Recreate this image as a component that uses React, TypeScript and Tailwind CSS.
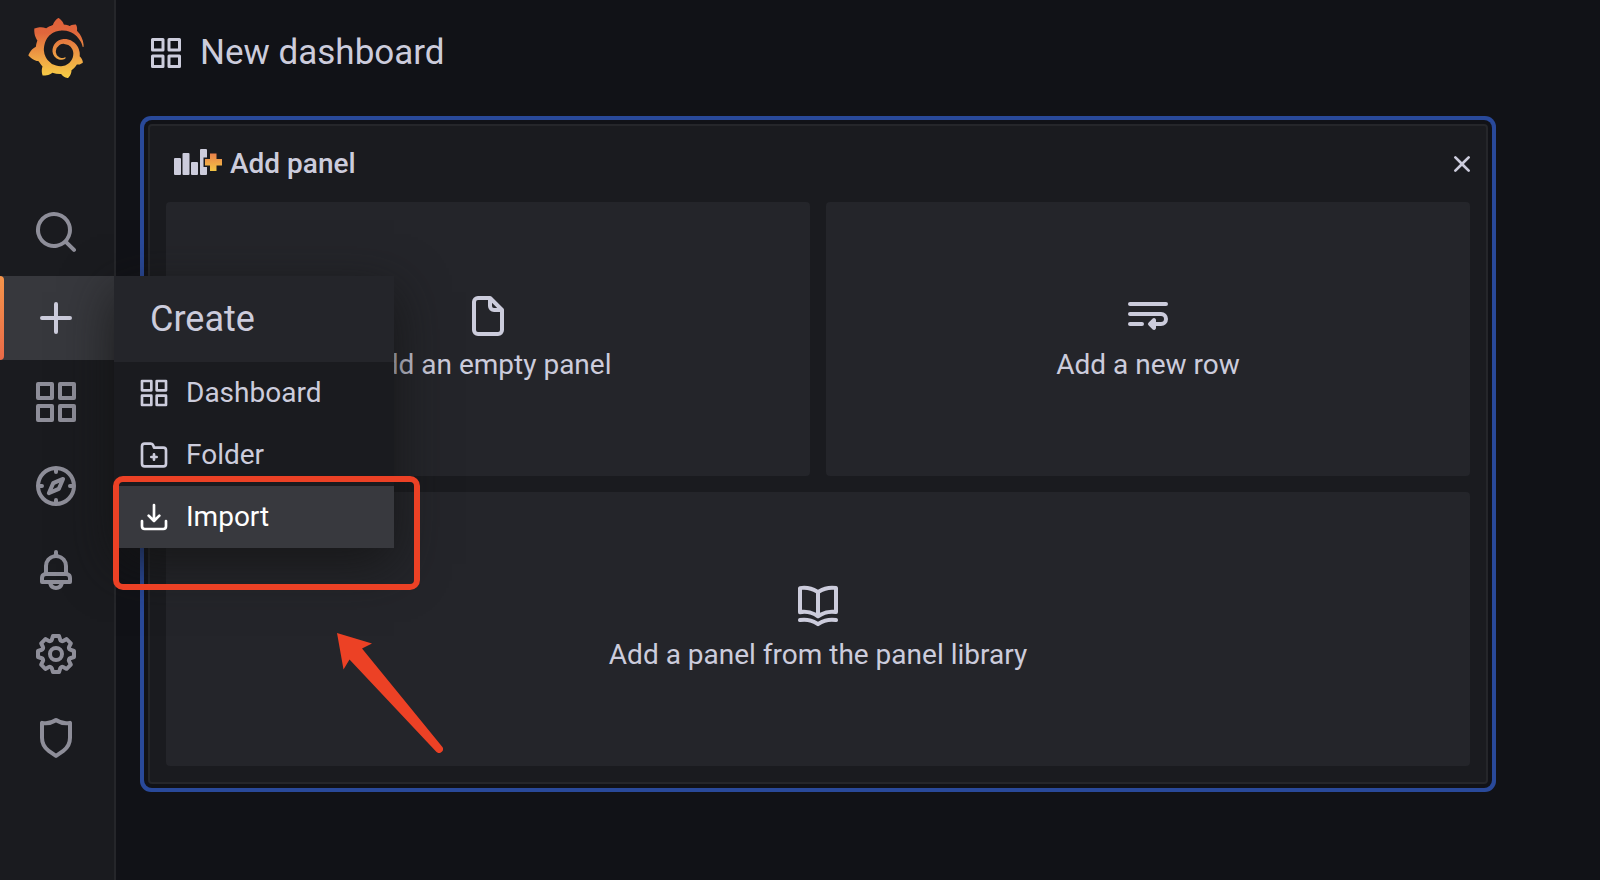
import React from 'react';
import { SiGrafana } from 'react-icons/si';

const paths = {
  apps: 'M10,13H3a1,1,0,0,0-1,1v7a1,1,0,0,0,1,1h7a1,1,0,0,0,1-1V14A1,1,0,0,0,10,13ZM9,20H4V15H9ZM21,2H14a1,1,0,0,0-1,1v7a1,1,0,0,0,1,1h7a1,1,0,0,0,1-1V3A1,1,0,0,0,21,2ZM20,9H15V4h5Zm1,4H14a1,1,0,0,0-1,1v7a1,1,0,0,0,1,1h7a1,1,0,0,0,1-1V14A1,1,0,0,0,21,13Zm-1,7H15V15h5ZM10,2H3A1,1,0,0,0,2,3v7a1,1,0,0,0,1,1h7a1,1,0,0,0,1-1V3A1,1,0,0,0,10,2ZM9,9H4V4H9Z',
  search:
    'M21.71,20.29,18,16.61A9,9,0,1,0,16.61,18l3.68,3.68a1,1,0,0,0,1.42,0A1,1,0,0,0,21.71,20.29ZM11,18a7,7,0,1,1,7-7A7,7,0,0,1,11,18Z',
  plus: 'M19,11H13V5a1,1,0,0,0-2,0v6H5a1,1,0,0,0,0,2h6v6a1,1,0,0,0,2,0V13h6a1,1,0,0,0,0-2Z',
  compass:
    'M12,2A10,10,0,1,0,22,12,10,10,0,0,0,12,2Zm1,17.93V19a1,1,0,0,0-2,0v.93A8,8,0,0,1,4.07,13H5a1,1,0,0,0,0-2H4.07A8,8,0,0,1,11,4.07V5a1,1,0,0,0,2,0V4.07A8,8,0,0,1,19.93,11H19a1,1,0,0,0,0,2h.93A8,8,0,0,1,13,19.93ZM15.14,7.55l-5,2.12a1,1,0,0,0-.52.52l-2.12,5a1,1,0,0,0,.21,1.1,1,1,0,0,0,.7.3.93.93,0,0,0,.4-.09l5-2.12a1,1,0,0,0,.52-.52l2.12-5a1,1,0,0,0-1.31-1.31Zm-2.49,5.1-2.28,1,1-2.28,2.28-1Z',
  bell: 'M18,13.18V10a6,6,0,0,0-5-5.91V3a1,1,0,0,0-2,0V4.09A6,6,0,0,0,6,10v3.18A3,3,0,0,0,4,16v2a1,1,0,0,0,1,1H8.14a4,4,0,0,0,7.72,0H19a1,1,0,0,0,1-1V16A3,3,0,0,0,18,13.18ZM8,10a4,4,0,0,1,8,0v3H8Zm4,10a2,2,0,0,1-1.72-1h3.44A2,2,0,0,1,12,20Zm6-3H6V16a1,1,0,0,1,1-1H17a1,1,0,0,1,1,1Z',
  cog: 'M21.32,9.55l-1.89-.63.89-1.78A1,1,0,0,0,20.13,6L18,3.87a1,1,0,0,0-1.15-.19l-1.78.89-.63-1.89A1,1,0,0,0,13.5,2h-3a1,1,0,0,0-.95.68L8.92,4.57,7.14,3.68A1,1,0,0,0,6,3.87L3.87,6a1,1,0,0,0-.19,1.15l.89,1.78-1.89.63A1,1,0,0,0,2,10.5v3a1,1,0,0,0,.68.95l1.89.63-.89,1.78A1,1,0,0,0,3.87,18L6,20.13a1,1,0,0,0,1.15.19l1.78-.89.63,1.89a1,1,0,0,0,.95.68h3a1,1,0,0,0,.95-.68l.63-1.89,1.78.89A1,1,0,0,0,18,20.13L20.13,18a1,1,0,0,0,.19-1.15l-.89-1.78,1.89-.63A1,1,0,0,0,22,13.5v-3A1,1,0,0,0,21.32,9.55ZM20,12.78l-1.2.4A2,2,0,0,0,17.64,16l.57,1.14-1.1,1.1L16,17.64a2,2,0,0,0-2.79,1.16l-.4,1.2H11.22l-.4-1.2A2,2,0,0,0,8,17.64l-1.14.57-1.1-1.1L6.36,16A2,2,0,0,0,5.2,13.18L4,12.78V11.22l1.2-.4A2,2,0,0,0,6.36,8L5.79,6.89l1.1-1.1L8,6.36A2,2,0,0,0,10.82,5.2l.4-1.2h1.56l.4,1.2A2,2,0,0,0,16,6.36l1.14-.57,1.1,1.1L17.64,8a2,2,0,0,0,1.16,2.79l1.2.4ZM12,8a4,4,0,1,0,4,4A4,4,0,0,0,12,8Zm0,6a2,2,0,1,1,2-2A2,2,0,0,1,12,14Z',
  shield:
    'M19.63,3.65a1,1,0,0,0-.84-.2,8,8,0,0,1-6.22-1.27,1,1,0,0,0-1.14,0A8,8,0,0,1,5.21,3.45a1,1,0,0,0-.84.2A1,1,0,0,0,4,4.43v7.45a9,9,0,0,0,3.77,7.33l3.65,2.6a1,1,0,0,0,1.16,0l3.65-2.6A9,9,0,0,0,20,11.88V4.43A1,1,0,0,0,19.63,3.65ZM18,11.88a7,7,0,0,1-2.93,5.7L12,19.77,8.93,17.58A7,7,0,0,1,6,11.88V5.58a10,10,0,0,0,6-1.39,10,10,0,0,0,6,1.39Z',
  file: 'M20,8.94a1.31,1.31,0,0,0-.06-.27l0-.09a1.07,1.07,0,0,0-.19-.28h0l-6-6h0a1.07,1.07,0,0,0-.28-.19.32.32,0,0,0-.09,0A.88.88,0,0,0,13.05,2H7A3,3,0,0,0,4,5V19a3,3,0,0,0,3,3H17a3,3,0,0,0,3-3V9S20,9,20,8.94ZM14,5.41,16.59,8H15a1,1,0,0,1-1-1ZM18,19a1,1,0,0,1-1,1H7a1,1,0,0,1-1-1V5A1,1,0,0,1,7,4h5V7a3,3,0,0,0,3,3h3Z',
  wrap: 'M3,7H21a1,1,0,0,0,0-2H3A1,1,0,0,0,3,7ZM18.5,10H3a1,1,0,0,0,0,2H18.5a1.5,1.5,0,0,1,0,3H16V14a1,1,0,0,0-1.64-.77l-2,2a1,1,0,0,0,0,1.54l2,2A1,1,0,0,0,16,18V17h2.5a3.5,3.5,0,0,0,0-7ZM9,15H3a1,1,0,0,0,0,2H9a1,1,0,0,0,0-2Z',
  book: 'M21.17,2.06A13.1,13.1,0,0,0,19,1.87a12.94,12.94,0,0,0-7,2.05,12.94,12.94,0,0,0-7-2,13.1,13.1,0,0,0-2.17.19,1,1,0,0,0-.83,1v12a1,1,0,0,0,1.17,1,10.9,10.9,0,0,1,8.25,1.91l.12.07.11,0a.91.91,0,0,0,.7,0l.11,0,.12-.07A10.9,10.9,0,0,1,20.83,16,1,1,0,0,0,22,15V3.06A1,1,0,0,0,21.17,2.06ZM11,15.35a12.87,12.87,0,0,0-6-1.48c-.33,0-.66,0-1,0v-10a8.69,8.69,0,0,1,1,0,10.86,10.86,0,0,1,6,1.8Zm9-1.44c-.34,0-.67,0-1,0a12.87,12.87,0,0,0-6,1.48V5.67a10.86,10.86,0,0,1,6-1.8,8.69,8.69,0,0,1,1,0Zm1.17,4.15A13.1,13.1,0,0,0,19,17.87a12.94,12.94,0,0,0-7,2.05,12.94,12.94,0,0,0-7-2.05,13.1,13.1,0,0,0-2.17.19A1,1,0,0,0,2,19.21,1,1,0,0,0,3.17,20a10.9,10.9,0,0,1,8.25,1.91,1,1,0,0,0,1.16,0A10.9,10.9,0,0,1,20.83,20,1,1,0,0,0,22,19.21,1,1,0,0,0,21.17,18.06Z',
  folder:
    'M14,12.5H13v-1a1,1,0,0,0-2,0v1H10a1,1,0,0,0,0,2h1v1a1,1,0,0,0,2,0v-1h1a1,1,0,0,0,0-2Zm5-7H12.72l-.32-1a3,3,0,0,0-2.84-2H5a3,3,0,0,0-3,3v13a3,3,0,0,0,3,3H19a3,3,0,0,0,3-3V8.5A3,3,0,0,0,19,5.5Zm1,13a1,1,0,0,1-1,1H5a1,1,0,0,1-1-1V5.5a1,1,0,0,1,1-1H9.56a1,1,0,0,1,.95.68l.54,1.64A1,1,0,0,0,12,7.5h7a1,1,0,0,1,1,1Z',
  import:
    'M21,14a1,1,0,0,0-1,1v4a1,1,0,0,1-1,1H5a1,1,0,0,1-1-1V15a1,1,0,0,0-2,0v4a3,3,0,0,0,3,3H19a3,3,0,0,0,3-3V15A1,1,0,0,0,21,14Zm-9.71,1.71a1,1,0,0,0,.33.21.94.94,0,0,0,.76,0,1,1,0,0,0,.33-.21l4-4a1,1,0,0,0-1.42-1.42L13,12.59V3a1,1,0,0,0-2,0v9.59l-2.29-2.3a1,1,0,1,0-1.42,1.42Z',
  times:
    'M13.41,12l4.3-4.29a1,1,0,1,0-1.42-1.42L12,10.59,7.71,6.29A1,1,0,0,0,6.29,7.71L10.59,12l-4.3,4.29a1,1,0,0,0,0,1.42,1,1,0,0,0,1.42,0L12,13.41l4.29,4.3a1,1,0,0,0,1.42,0,1,1,0,0,0,0-1.42Z',
};

type IconName = keyof typeof paths;

function Icon({ name, className }: { name: IconName; className: string }) {
  return (
    <svg viewBox="0 0 24 24" fill="currentColor" aria-hidden="true" className={className}>
      <path d={paths[name]} />
    </svg>
  );
}

function GrafanaLogo() {
  return (
    <>
      <svg className="absolute size-0" aria-hidden="true">
        <defs>
          <linearGradient id="logo-fill" x1="0" y1="1" x2="0" y2="0">
            <stop offset="0" stopColor="#f7cf45" />
            <stop offset="0.3" stopColor="#f0a845" />
            <stop offset="0.75" stopColor="#e0663c" />
            <stop offset="1" stopColor="#de613a" />
          </linearGradient>
        </defs>
      </svg>
      <SiGrafana className="size-[60px]" fill="url(#logo-fill)" />
    </>
  );
}

function AddPanelIcon() {
  const plus = 'M36 5.5h6.5v5.500h5.500v6.500h-5.500v5.500h-6.500v-5.500h-5v-6.500h5z';
  return (
    <svg viewBox="0 0 48 32" className="h-8 w-12" aria-hidden="true">
      <defs>
        <linearGradient id="plus-fill" x1="0" y1="0" x2="0" y2="1">
          <stop offset="0" stopColor="#e9804a" />
          <stop offset="1" stopColor="#f3c544" />
        </linearGradient>
      </defs>
      <g fill="#ccccdc">
        <rect x="0" y="10" width="7" height="17" rx="1" />
        <rect x="8.5" y="5" width="7" height="22" rx="1" />
        <rect x="17" y="14" width="7" height="13" rx="1" />
        <rect x="26" y="1" width="7" height="26" rx="1" />
      </g>
      <path d={plus} fill="#1a1b1f" stroke="#1a1b1f" strokeWidth="3" />
      <path d={plus} fill="url(#plus-fill)" />
    </svg>
  );
}

function NavButton({ name, label }: { name: IconName; label: string }) {
  return (
    <button type="button" aria-label={label} className="flex h-[84px] w-full items-center justify-center pr-0.5 text-[#8e8e99]">
      <Icon name={name} className="size-12" />
    </button>
  );
}

function MenuItem({ name, label, active }: { name: IconName; label: string; active?: boolean }) {
  return (
    <li>
      <a
        href="#"
        className={
          active
            ? 'flex h-[62px] items-center gap-4 bg-[#38393e] px-6 text-white'
            : 'flex h-[62px] items-center gap-4 px-6'
        }
      >
        <Icon name={name} className="size-8" />
        {label}
      </a>
    </li>
  );
}

function CreateMenu() {
  return (
    <div className="absolute top-0 left-full z-10 w-[280px] bg-[#1a1b1f] shadow-[0_16px_48px_rgba(20,20,20,0.8)]">
      <div className="flex h-[86px] items-center bg-[#24252a] pl-9 text-4xl">Create</div>
      <ul>
        <MenuItem name="apps" label="Dashboard" />
        <MenuItem name="folder" label="Folder" />
        <MenuItem name="import" label="Import" active />
      </ul>
    </div>
  );
}

function Sidebar() {
  return (
    <nav className="relative z-10 flex w-[116px] shrink-0 flex-col border-r-2 border-[#25262a] bg-[#1a1b1f]">
      <a href="#" aria-label="Home" className="flex h-24 items-center justify-center pr-0.5">
        <GrafanaLogo />
      </a>
      <div className="pt-[94px]">
        <NavButton name="search" label="Search" />
      </div>
      <div className="relative mt-0.5 h-[84px] bg-[#37383d]">
        <span className="absolute inset-y-0 left-0 w-1 rounded-r bg-linear-to-b from-[#f5944a] to-[#e96a48]" />
        <button type="button" aria-label="Create" className="flex size-full items-center justify-center pr-0.5">
          <Icon name="plus" className="size-12" />
        </button>
        <CreateMenu />
      </div>
      <NavButton name="apps" label="Dashboards" />
      <NavButton name="compass" label="Explore" />
      <NavButton name="bell" label="Alerting" />
      <NavButton name="cog" label="Configuration" />
      <NavButton name="shield" label="Server Admin" />
    </nav>
  );
}

function PanelOption({ name, label, wide }: { name: IconName; label: string; wide?: boolean }) {
  return (
    <button
      type="button"
      className={
        wide
          ? 'col-span-2 flex h-[274px] flex-col items-center justify-center gap-0.5 rounded bg-[#24252a]'
          : 'flex h-[274px] flex-col items-center justify-center gap-0.5 rounded bg-[#24252a]'
      }
    >
      <Icon name={name} className="size-12" />
      <span className="leading-[45px]">{label}</span>
    </button>
  );
}

function Annotations() {
  return (
    <div className="pointer-events-none absolute inset-0 z-20">
      <div className="absolute top-[476px] left-[113px] h-[114px] w-[307px] rounded-[10px] border-6 border-[#ec4125]" />
      <svg viewBox="0 0 106 120" className="absolute top-[633px] left-[337px] h-[120px] w-[106px]" aria-hidden="true">
        <path d="M0 0 35 10.5 25 15.5 105 113.5A3.900 3.900 0 0 1 99.5 119L12.5 26.5 6.5 36.5Z" fill="#ec4125" />
      </svg>
    </div>
  );
}

export default function App() {
  return (
    <div className="relative flex min-h-screen bg-[#111217] font-[Roboto,sans-serif] text-[28px] text-[#ccccdc]">
      <Sidebar />
      <main className="min-w-0 flex-1 pr-28 pl-8">
        <header className="flex h-[106px] items-center gap-4">
          <Icon name="apps" className="size-9" />
          <h1 className="text-[35px]">New dashboard</h1>
        </header>
        <section className="mt-[18px] rounded border-2 border-[#25262a] bg-[#1a1b1f] px-4 pb-4 shadow-[0_0_0_4px_#111217,0_0_0_8px_#29499a]">
          <div className="-mr-2 flex h-[76px] items-center gap-2 pl-2">
            <AddPanelIcon />
            <h2 className="flex-1 font-medium">Add panel</h2>
            <button type="button" aria-label="Close">
              <Icon name="times" className="size-8" />
            </button>
          </div>
          <div className="grid grid-cols-2 gap-4">
            <PanelOption name="file" label="Add an empty panel" />
            <PanelOption name="wrap" label="Add a new row" />
            <PanelOption name="book" label="Add a panel from the panel library" wide />
          </div>
        </section>
      </main>
      <Annotations />
    </div>
  );
}
